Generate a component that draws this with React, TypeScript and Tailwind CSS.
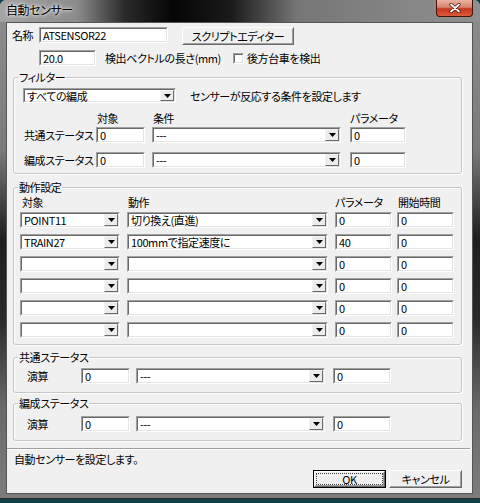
import React from 'react';

// ─── Classic 3D borders ──────────────────────────────────────────────

const sunkenOuter = 'border border-t-[#a0a0a0] border-l-[#a0a0a0] border-b-white border-r-white';
const sunkenInner = 'border border-t-[#696969] border-l-[#696969] border-b-[#e3e3e3] border-r-[#e3e3e3]';

function Edit({ className, value, tall = true }: { className: string; value?: string; tall?: boolean }) {
    return (
        <div className={`${sunkenOuter} ${tall ? 'h-[16px]' : 'h-[15px]'} shrink-0 ${className}`}>
            <div className={`${sunkenInner} flex h-full items-center bg-white pl-[2px] leading-[12px]`}>
                {value}
            </div>
        </div>
    );
}

function DropButton() {
    return (
        <div className="flex h-full w-[14px] shrink-0 items-center justify-center border border-t-[#f4f4f4] border-l-[#f4f4f4] border-b-[#696969] border-r-[#696969] bg-[#ececec]">
            <svg width="7" height="4" viewBox="0 0 7 4">
                <path d="M0 0h7L3.5 4z" fill="#000" />
            </svg>
        </div>
    );
}

function Combo({ className, value, tall = true }: { className: string; value?: string; tall?: boolean }) {
    return (
        <div className={`${sunkenOuter} ${tall ? 'h-[16px]' : 'h-[15px]'} shrink-0 ${className}`}>
            <div className={`${sunkenInner} flex h-full items-center bg-white`}>
                <span className="flex-1 pl-[2px] leading-[12px]">{value}</span>
                <DropButton />
            </div>
        </div>
    );
}

function Button({ children, className, isDefault }: { children: React.ReactNode; className: string; isDefault?: boolean }) {
    return (
        <div className={`${isDefault ? 'border border-black' : ''} shrink-0 ${className}`}>
            <div className="h-full border border-t-white border-l-white border-b-[#696969] border-r-[#696969] bg-[#f0f0f0]">
                <div className="flex h-full items-center justify-center border border-t-[#f0f0f0] border-l-[#f0f0f0] border-b-[#a0a0a0] border-r-[#a0a0a0] leading-[12px]">
                    {isDefault ? (
                        <div className="flex h-full w-full items-center justify-center border border-dotted border-[#404040]">
                            {children}
                        </div>
                    ) : (
                        children
                    )}
                </div>
            </div>
        </div>
    );
}

function Group({ label, children }: { label: string; children: React.ReactNode }) {
    return (
        <fieldset className="ml-[1px] w-[449px] rounded-[3px] border border-[#c6c6c6] shadow-[inset_1px_1px_0_#ffffff,1px_1px_0_#ffffff]">
            <legend className="ml-[4px] px-[1px] leading-[12px]">{label}</legend>
            {children}
        </fieldset>
    );
}

// ─── Data ────────────────────────────────────────────────────────────

const actionRows = [
    { target: 'POINT11', action: '切り換え(直進)', param: '0', start: '0' },
    { target: 'TRAIN27', action: '100mmで指定速度に', param: '40', start: '0' },
    { target: '', action: '', param: '0', start: '0' },
    { target: '', action: '', param: '0', start: '0' },
    { target: '', action: '', param: '0', start: '0' },
    { target: '', action: '', param: '0', start: '0' },
];

// ─── Window ──────────────────────────────────────────────────────────

function TitleBar() {
    return (
        <div className="flex h-[22px] shrink-0 items-start justify-between rounded-t-[6px] bg-[linear-gradient(to_right,#a4a4a4_0%,#8c8c8c_16%,#2a2a2a_26%,#050505_36%,#1a1a1a_48%,#767676_62%,#909090_100%)]">
            <span className="pl-[6px] pt-[4px] text-[12px] leading-[12px] [text-shadow:0_0_5px_#ffffff,0_0_3px_#ffffff]">
                自動センサー
            </span>
            <div className="mr-[7px] flex h-[17px] w-[37px] items-center justify-center rounded-b-[4px] border border-t-0 border-[#4a1208] bg-[linear-gradient(to_bottom,#eab2a4_0%,#d8846e_45%,#c4371b_55%,#dc5a3c_100%)]">
                <svg width="12" height="10" viewBox="0 0 12 10">
                    <path d="M2 1.5l8 7M10 1.5l-8 7" stroke="#3a1008" strokeWidth="3.2" strokeLinecap="round" />
                    <path d="M2 1.5l8 7M10 1.5l-8 7" stroke="#ffffff" strokeWidth="1.8" strokeLinecap="round" />
                </svg>
            </div>
        </div>
    );
}

export default function App() {
    return (
        <div className="h-[503px] w-[480px] overflow-hidden whitespace-nowrap bg-[#0e3f49] font-['Noto_Sans_CJK_JP',sans-serif] text-[11px] tracking-[-0.4px] text-black [font-feature-settings:'palt']">
            <div className="flex h-[499px] w-[480px] flex-col rounded-t-[6px] border-b border-[#2a2a2a] bg-[linear-gradient(to_bottom,#8e8e8e_0%,#7a7a7a_30%,#1e1e1e_48%,#2a2a2a_64%,#6a6a6a_82%,#7c7c7c_100%)]">
                <TitleBar />

                {/* ── Client ── */}
                <div className="mb-[4px] ml-[6px] mr-[7px] flex-1 overflow-hidden border border-[#555555] bg-[#f0f0f0]">
                    <div className="pl-[5px] pt-[4px]">
                        {/* 名称 */}
                        <div className="flex h-[18px] items-start">
                            <span className="flex h-[16px] w-[27px] items-center leading-[12px]">名称</span>
                            <Edit className="w-[129px]" value="ATSENSOR22" />
                            <Button className="ml-[14px] h-[18px] w-[112px]">スクリプトエディター</Button>
                        </div>

                        {/* 検出ベクトル */}
                        <div className="mt-[5px] flex h-[16px] items-center">
                            <Edit className="ml-[27px] w-[57px]" value="20.0" />
                            <span className="ml-[9px] w-[128px] leading-[12px]">検出ベクトルの長さ(mm)</span>
                            <div className={`${sunkenOuter} h-[11px] w-[11px]`}>
                                <div className={`${sunkenInner} h-full bg-white`} />
                            </div>
                            <span className="ml-[3px] leading-[12px]">後方台車を検出</span>
                        </div>

                        {/* ── フィルター ── */}
                        <div className="mt-[5px]">
                            <Group label="フィルター">
                                <div className="mt-[5px] flex h-[15px] items-center pl-[9px]">
                                    <Combo className="w-[153px]" value="すべての編成" tall={false} />
                                    <span className="ml-[14px] leading-[12px]">センサーが反応する条件を設定します</span>
                                </div>
                                <div className="mt-[9px] flex h-[12px] pl-[83px] leading-[12px]">
                                    <span className="w-[56px]">対象</span>
                                    <span className="w-[197px]">条件</span>
                                    <span>パラメータ</span>
                                </div>
                                <div className="mt-[3px] flex h-[16px] items-center">
                                    <span className="w-[82px] pl-[10px] leading-[12px]">共通ステータス</span>
                                    <Edit className="w-[49px]" value="0" />
                                    <Combo className="ml-[7px] w-[189px]" value="---" />
                                    <Edit className="ml-[9px] w-[56px]" value="0" />
                                </div>
                                <div className="mb-[5px] mt-[9px] flex h-[16px] items-center">
                                    <span className="w-[82px] pl-[10px] leading-[12px]">編成ステータス</span>
                                    <Edit className="w-[49px]" value="0" />
                                    <Combo className="ml-[7px] w-[189px]" value="---" />
                                    <Edit className="ml-[9px] w-[56px]" value="0" />
                                </div>
                            </Group>
                        </div>

                        {/* ── 動作設定 ── */}
                        <div className="mt-[7px]">
                            <Group label="動作設定">
                                <div className="mt-[3px] flex h-[12px] pl-[8px] leading-[12px]">
                                    <span className="w-[106px]">対象</span>
                                    <span className="w-[207px]">動作</span>
                                    <span className="w-[63px]">パラメータ</span>
                                    <span>開始時間</span>
                                </div>
                                <div className="mb-[6px] mt-[4px] flex flex-col gap-[6px] pl-[6px]">
                                    {actionRows.map((r, i) => (
                                        <div key={i} className="flex h-[16px] items-center">
                                            <Combo className="w-[100px]" value={r.target} />
                                            <Combo className="ml-[7px] w-[201px]" value={r.action} />
                                            <Edit className="ml-[7px] w-[57px]" value={r.param} />
                                            <Edit className="ml-[5px] w-[57px]" value={r.start} />
                                        </div>
                                    ))}
                                </div>
                            </Group>
                        </div>

                        {/* ── 共通ステータス ── */}
                        <div className="mt-[6px]">
                            <Group label="共通ステータス">
                                <div className="mb-[8px] mt-[5px] flex h-[16px] items-center">
                                    <span className="w-[67px] pl-[13px] leading-[12px]">演算</span>
                                    <Edit className="w-[49px]" value="0" />
                                    <Combo className="ml-[6px] w-[189px]" value="---" />
                                    <Edit className="ml-[8px] w-[58px]" value="0" />
                                </div>
                            </Group>
                        </div>

                        {/* ── 編成ステータス ── */}
                        <div className="mt-[4px]">
                            <Group label="編成ステータス">
                                <div className="mb-[8px] mt-[7px] flex h-[16px] items-center">
                                    <span className="w-[67px] pl-[13px] leading-[12px]">演算</span>
                                    <Edit className="w-[49px]" value="0" />
                                    <Combo className="ml-[6px] w-[189px]" value="---" />
                                    <Edit className="ml-[8px] w-[58px]" value="0" />
                                </div>
                            </Group>
                        </div>
                    </div>

                    {/* Separator */}
                    <div className="mt-[7px] w-[463px] border-b border-t border-b-white border-t-[#a0a0a0]" />

                    <div className="mt-[3px] h-[12px] pl-[7px] leading-[12px]">自動センサーを設定します。</div>

                    <div className="mt-[5px] flex justify-end gap-[3px] pr-[10px]">
                        <Button className="h-[18px] w-[73px]" isDefault>
                            OK
                        </Button>
                        <Button className="h-[18px] w-[73px]">キャンセル</Button>
                    </div>
                </div>
            </div>
        </div>
    );
}
